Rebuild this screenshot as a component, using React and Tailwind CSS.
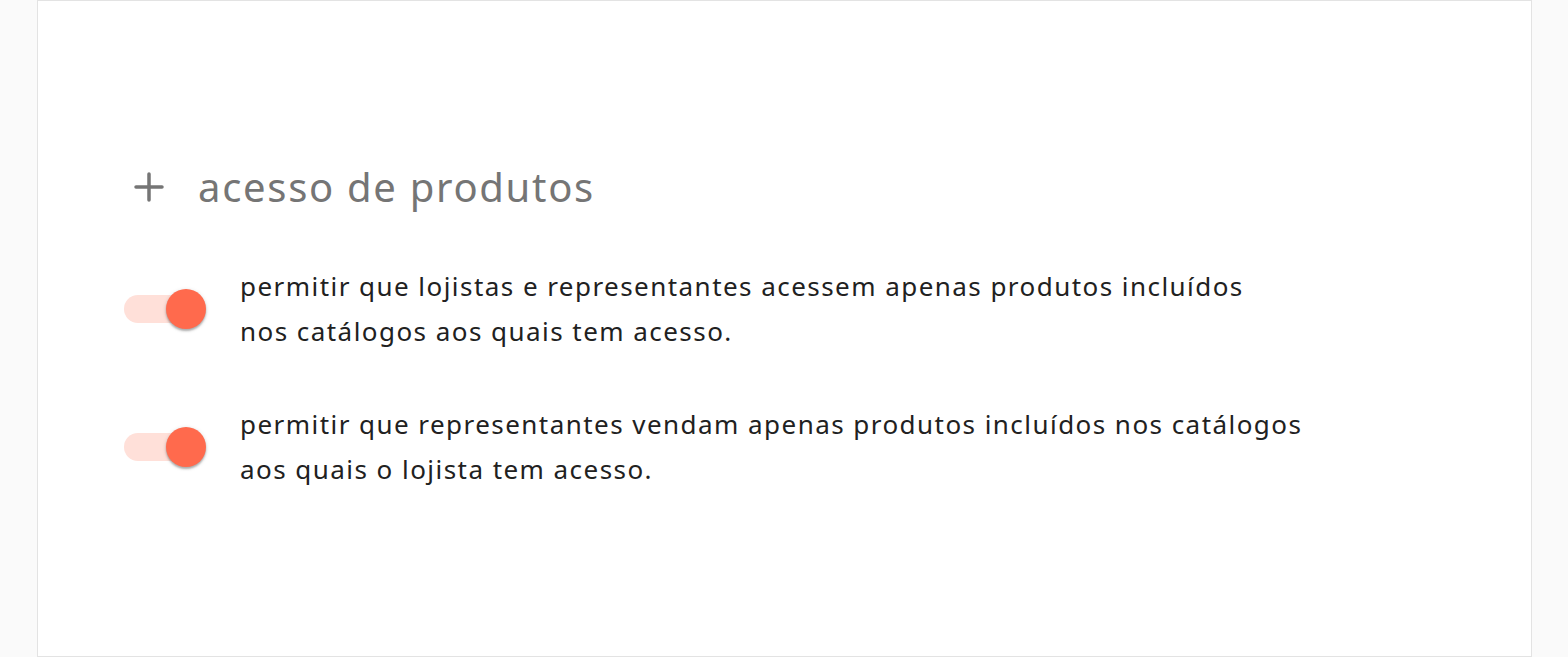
export default function App() {
  const items = [
    [
      "permitir que lojistas e representantes acessem apenas produtos incluídos",
      "nos catálogos aos quais tem acesso.",
    ],
    [
      "permitir que representantes vendam apenas produtos incluídos nos catálogos",
      "aos quais o lojista tem acesso.",
    ],
  ];

  return (
    <div
      className="min-h-[657px] bg-[#fafafa] pl-[37px]"
      style={{ fontFamily: '"Noto Sans", sans-serif' }}
    >
      <div className="h-[657px] w-[1495px] border border-[#e3e3e3] bg-white pl-[86px] pt-[161px]">
        {/* section title */}
        <div className="flex items-center h-[50px]">
          <svg width="30" height="30" viewBox="0 0 30 30" className="ml-[10px]">
            <path d="M15 2v26M2 15h26" stroke="#757575" strokeWidth="3.5" strokeLinecap="round" />
          </svg>
          <span className="ml-[34px] text-[40px] leading-[50px] text-[#757575] tracking-[1.7px]">
            acesso de produtos
          </span>
        </div>

        <div className="mt-[52px] flex flex-col gap-[49px]">
          {items.map((lines, i) => (
            <div key={i} className="flex items-center">
              {/* checked switch */}
              <div className="relative h-[40px] w-[84px] shrink-0">
                <div className="absolute left-0 top-[6px] h-[28px] w-[68px] rounded-full bg-[#ffe0d9]" />
                <div className="absolute left-[42px] top-0 h-[40px] w-[40px] rounded-full bg-[#ff6a4d] shadow-[0_2px_2px_rgba(0,0,0,0.25),0_1px_4px_rgba(0,0,0,0.15)]" />
              </div>
              <p className="ml-[32px] text-[26px] leading-[44.5px] text-[#212121] tracking-[1.45px]">
                {lines[0]}
                <br />
                {lines[1]}
              </p>
            </div>
          ))}
        </div>
      </div>
    </div>
  );
}
